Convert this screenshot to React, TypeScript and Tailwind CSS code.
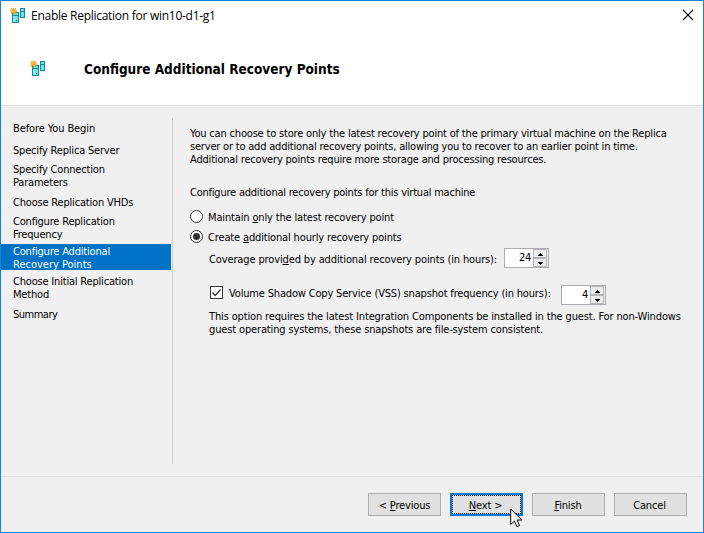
import type { ReactNode } from "react";

function Line({ children, className = "" }: { children: ReactNode; className?: string }) {
  return <div className={`h-[13px] leading-[13px] whitespace-nowrap ${className}`}>{children}</div>;
}

function Key({ children }: { children: ReactNode }) {
  return <span className="underline decoration-1 underline-offset-[1px] [text-decoration-skip-ink:none]">{children}</span>;
}

function ServerIcon() {
  return (
    <svg width="16" height="16" viewBox="0 0 16 16" className="block shrink-0" shapeRendering="crispEdges">
      <rect x="2.5" y="5.5" width="6" height="10" fill="#6fe3ea" stroke="#17868f" />
      <path d="M2 8.5h7" stroke="#17868f" />
      <rect x="3" y="9" width="2" height="6" fill="#8eedf2" />
      <rect x="6" y="13" width="1" height="1" fill="#0b3c42" />
      <rect x="10.500" y="1.500" width="4" height="9" fill="#6fe3ea" stroke="#17868f" />
      <path d="M10 4.500h5" stroke="#17868f" />
      <g shapeRendering="auto">
        <path d="M3.500 .5v7M0 4h7M1 1.500l5 5M6 1.500l-5 5" stroke="#e79a1b" strokeWidth="1.100" />
        <circle cx="3.500" cy="4" r="1.700" fill="#ffb52b" />
      </g>
    </svg>
  );
}

function Radio({ checked = false }: { checked?: boolean }) {
  return (
    <svg width="13" height="13" className="block shrink-0">
      <circle cx="6.500" cy="6.500" r="6" fill="#fff" stroke="#333" />
      {checked && <circle cx="6.500" cy="6.500" r="3.500" fill="#333" />}
    </svg>
  );
}

function Spinner({ value }: { value: string }) {
  return (
    <div className="flex h-5 w-[45px] shrink-0 border border-[#abadb3] bg-white">
      <div className="w-[26px] pt-[2px] text-right tracking-[-0.3px] leading-[13px]">{value}</div>
      <div className="ml-[2px] flex w-[15px] flex-col bg-[#f0f0f0]">
        {["M4 5.500h5M5 4.500h3M6 3.500h1", "M4 3.500h5M5 4.500h3M6 5.500h1"].map((d) => (
          <div key={d} className="h-[9px] w-[14px] border border-[#b5b5b5] bg-[#ececec]">
            <svg width="12" height="8" viewBox="0 0 12 8" className="block" shapeRendering="crispEdges">
              <path d={d} stroke="#000" />
            </svg>
          </div>
        ))}
      </div>
    </div>
  );
}

const button = "h-[23px] w-[73px] border border-[#adadad] bg-[#e1e1e1] pt-[5px] text-center leading-[13px] whitespace-nowrap";

export default function App() {
  return (
    <div className="relative flex h-[533px] w-[704px] flex-col overflow-hidden border border-[#1883d7] bg-[#f0f0f0] font-['DejaVu_Sans_Condensed','DejaVu_Sans',sans-serif] text-[11px] text-black">
      <header className="h-[105px] shrink-0 border-b border-[#dfdfdf] bg-white">
        <div className="flex h-[30px] items-start pt-[6px] pl-[9px]">
          <ServerIcon />
          <div className="ml-[5px] pt-px font-['Open_Sans',sans-serif] text-[12px] leading-[16px] tracking-[-0.27px] whitespace-nowrap">Enable Replication for win10-d1-g1</div>
          <svg width="12" height="12" viewBox="0 0 12 12" className="mt-[2px] mr-[9px] ml-auto block">
            <path d="M1 1l10 10M11 1L1 11" stroke="#000" strokeWidth="1.100" />
          </svg>
        </div>
        <div className="flex items-start pt-[29px] pl-[29px]">
          <ServerIcon />
          <h1 className="ml-[38px] text-[13.500px] leading-[18px] font-bold whitespace-nowrap">Configure Additional Recovery Points</h1>
        </div>
      </header>
      <div className="flex h-[370px] shrink-0">
        <nav className="w-[170px] pt-4 tracking-[-0.19px]">
          <Line className="pl-3 tracking-[-0.1px]">Before You Begin</Line>
          <Line className="mt-[9px] pl-3">Specify Replica Server</Line>
          <div className="mt-[6px] pl-3"><Line>Specify Connection</Line><Line>Parameters</Line></div>
          <Line className="mt-[7px] pl-3">Choose Replication VHDs</Line>
          <div className="mt-[6px] pl-3"><Line>Configure Replication</Line><Line>Frequency</Line></div>
          <div className="mt-[3px] h-[26px] bg-[#0072c6] pt-px pl-3 text-white"><Line>Configure Additional</Line><Line className="tracking-[0px]">Recovery Points</Line></div>
          <div className="mt-[5px] pl-3"><Line>Choose Initial Replication</Line><Line>Method</Line></div>
          <Line className="mt-[7px] pl-3 tracking-[-0.5px]">Summary</Line>
        </nav>
        <div className="mt-3 ml-px h-[346px] w-px bg-[#cdcdcd]" />
        <main className="ml-[17px] pt-[21px]">
          <Line className="tracking-[-0.18px]">You can choose to store only the latest recovery point of the primary virtual machine on the Replica</Line>
          <Line className="tracking-[-0.196px]">server or to add additional recovery points, allowing you to recover to an earlier point in time.</Line>
          <Line className="tracking-[-0.185px]">Additional recovery points require more storage and processing resources.</Line>
          <Line className="mt-5 tracking-[-0.22px]">Configure additional recovery points for this virtual machine</Line>
          <div className="mt-[11px] flex">
            <Radio /><Line className="ml-[5px] pt-px tracking-[-0.15px]">Maintain <Key>o</Key>nly the latest recovery point</Line>
          </div>
          <div className="mt-[7px] flex">
            <Radio checked /><Line className="ml-[5px] pt-px tracking-[-0.15px]">Create <Key>a</Key>dditional hourly recovery points</Line>
          </div>
          <div className="mt-[5px] flex pl-[19px]">
            <Line className="mt-[5px] w-[295px] tracking-[-0.13px]">Coverage provi<Key>d</Key>ed by additional recovery points (in hours):</Line>
            <Spinner value="24" />
          </div>
          <div className="mt-[17px] flex pl-5">
            <svg width="13" height="13" className="mt-px block shrink-0">
              <rect x=".5" y=".5" width="12" height="12" fill="#fff" stroke="#333" />
              <path d="M2.500 6.500l2.700 3L10.500 3.500" fill="none" stroke="#333" strokeWidth="1.300" />
            </svg>
            <Line className="mt-[2px] ml-[6px] w-[332px] tracking-[-0.17px]">Volume Shadow Copy Service (VSS) snapshot frequency (in hours):</Line>
            <Spinner value="4" />
          </div>
          <div className="mt-[5px] pl-[19px] tracking-[-0.143px]">
            <Line>This option requires the latest Integration Components be installed in the guest. For non-Windows</Line>
            <Line>guest operating systems, these snapshots are file-system consistent.</Line>
          </div>
        </main>
      </div>
      <footer className="flex grow items-start gap-[9px] border-t border-[#dfdfdf] pt-4 pl-[367px] tracking-[-0.15px]">
        <div className={button}>&lt; <Key>P</Key>revious</div>
        <div className="h-[23px] w-[73px] border-2 border-[#0078d7] bg-[#e1e1e1]">
          <div className="h-[19px] border border-dotted border-black pt-[3px] pr-[2px] text-center leading-[13px]"><Key>N</Key>ext &gt;</div>
        </div>
        <div className={`${button} pr-px`}><Key>F</Key>inish</div>
        <div className={`${button} pr-[2px]`}>Cancel</div>
      </footer>
      <svg width="14" height="21" viewBox="0 0 14 21" className="absolute top-[507px] left-[509px]">
        <path d="M.7 1v15.500l3.700-3.500 2.500 5.700 2.600-1.100L7 12h5z" fill="#fff" stroke="#000" />
      </svg>
    </div>
  );
}
